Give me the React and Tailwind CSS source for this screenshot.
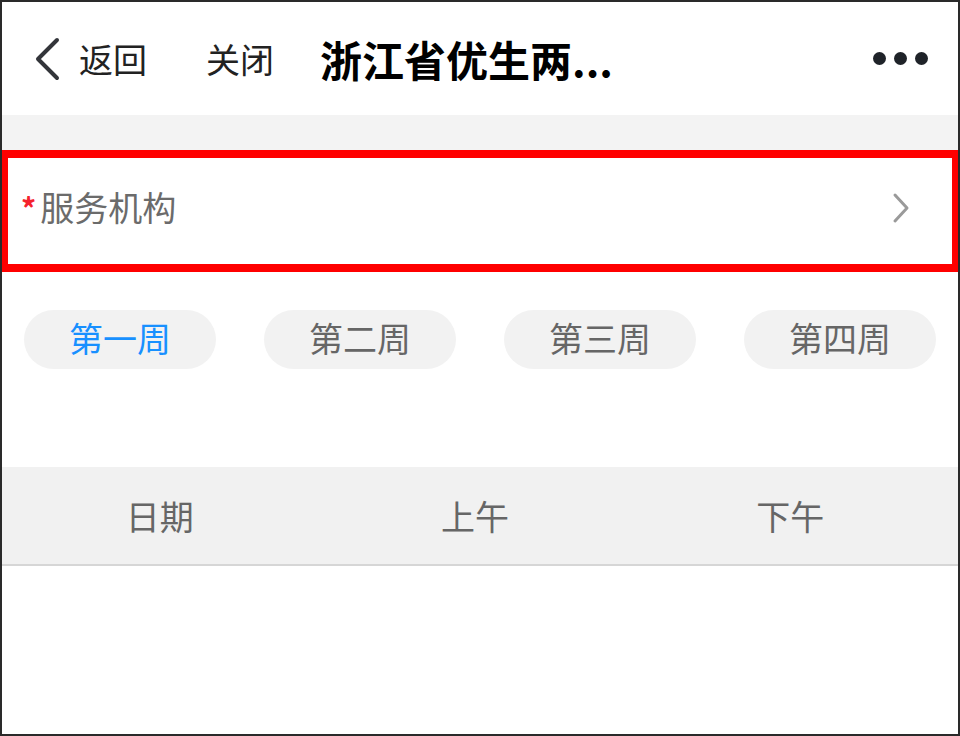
import React from "react";

export default function App() {
  const weeks = ["第一周", "第二周", "第三周", "第四周"];
  return (
    <div
      className="w-[960px] h-[736px] border-2 border-[#2a2a2a] bg-white flex flex-col overflow-hidden box-border"
      style={{ fontFamily: '"Noto Sans CJK SC", "Noto Sans", sans-serif' }}
    >
      {/* header */}
      <div className="h-[113px] flex items-center shrink-0 bg-white">
        <svg className="ml-[31px] w-[28px] h-[44px]" viewBox="0 0 28 44" fill="none">
          <path d="M24 3 L5 22 L24 41" stroke="#33353a" strokeWidth="4" strokeLinecap="round" strokeLinejoin="round" />
        </svg>
        <span className="ml-[18px] text-[34px] leading-none text-[#222]">返回</span>
        <span className="ml-[59px] text-[34px] leading-none text-[#222]">关闭</span>
        <span className="ml-[46px] text-[42px] leading-none font-bold text-black">浙江省优生两...</span>
        <div className="ml-auto mr-[30px] flex items-center gap-[8px]">
          <span className="w-[13px] h-[13px] rounded-full bg-[#1f2329]" />
          <span className="w-[13px] h-[13px] rounded-full bg-[#1f2329]" />
          <span className="w-[13px] h-[13px] rounded-full bg-[#1f2329]" />
        </div>
      </div>

      {/* gray band */}
      <div className="h-[35px] bg-[#f3f3f3] shrink-0" />

      {/* service org row with red highlight */}
      <div className="h-[122px] shrink-0 border-x-[6px] border-y-[8px] border-[#ff0000] bg-white flex items-center pb-[8px]">
        <span className="ml-[13px] text-[30px] leading-none text-[#f5222d] font-bold">*</span>
        <span className="ml-[4px] text-[34px] leading-none text-[#6b6b6b]">服务机构</span>
        <svg className="ml-auto mr-[41px] w-[20px] h-[32px] mt-[2px]" viewBox="0 0 20 32" fill="none">
          <path d="M4 3 L16 16 L4 29" stroke="#9a9a9a" strokeWidth="3" strokeLinecap="round" strokeLinejoin="round" />
        </svg>
      </div>

      {/* week pills */}
      <div className="pt-[38px] pl-[22px] flex gap-[48px] shrink-0">
        {weeks.map((w, i) => (
          <div
            key={w}
            className={
              i === 0
                ? "w-[192px] h-[59px] rounded-full bg-[#f2f2f2] flex items-center justify-center text-[34px] leading-none text-[#1890ff] pb-[3px]"
                : "w-[192px] h-[59px] rounded-full bg-[#f2f2f2] flex items-center justify-center text-[34px] leading-none text-[#666666] pb-[3px]"
            }
          >
            {w}
          </div>
        ))}
      </div>

      <div className="h-[98px] shrink-0" />

      {/* table header */}
      <div className="h-[99px] shrink-0 bg-[#f1f1f1] border-b-2 border-[#d6d6d6] grid grid-cols-3 pr-[10px] items-center">
        <div className="text-center text-[34px] leading-none text-[#666666]">日期</div>
        <div className="text-center text-[34px] leading-none text-[#666666]">上午</div>
        <div className="text-center text-[34px] leading-none text-[#666666]">下午</div>
      </div>

      <div className="flex-1 bg-white" />
    </div>
  );
}
